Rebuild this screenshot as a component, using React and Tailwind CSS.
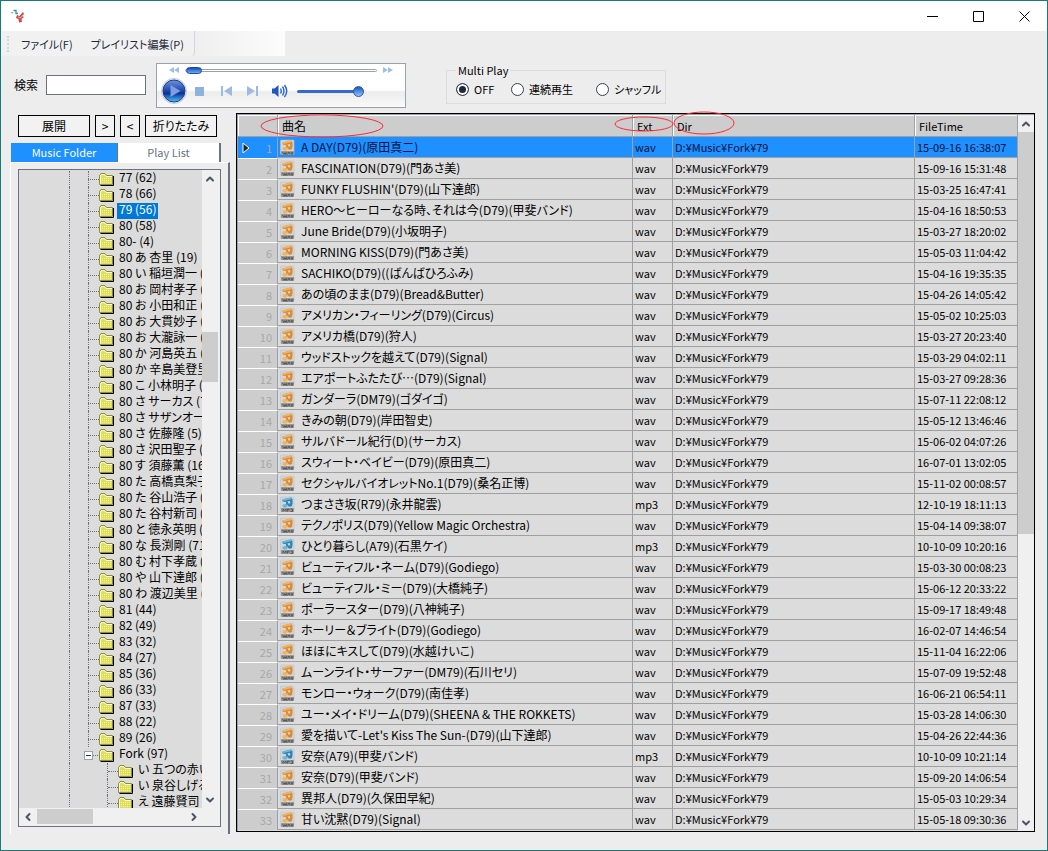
import { useState } from 'react'
import { ChevronUp, ChevronDown, ChevronLeft, ChevronRight } from 'lucide-react'

const FOLDERS = [
  '77 (62)', '78 (66)', '79 (56)', '80 (58)', '80- (4)', '80 あ 杏里 (19)', '80 い 稲垣潤一 (12)',
  '80 お 岡村孝子 (10)', '80 お 小田和正 (14)', '80 お 大貫妙子 (11)', '80 お 大瀧詠一 (15)',
  '80 か 河島英五 (8)', '80 か 辛島美登里 (9)', '80 こ 小林明子 (7)', '80 さ サーカス (7)',
  '80 さ サザンオールスターズ (20)', '80 さ 佐藤隆 (5)', '80 さ 沢田聖子 (6)', '80 す 須藤薫 (16)',
  '80 た 高橋真梨子 (13)', '80 た 谷山浩子 (10)', '80 た 谷村新司 (11)', '80 と 徳永英明 (9)',
  '80 な 長渕剛 (71)', '80 む 村下孝蔵 (12)', '80 や 山下達郎 (18)', '80 わ 渡辺美里 (14)',
  '81 (44)', '82 (49)', '83 (32)', '84 (27)', '85 (36)', '86 (33)', '87 (33)', '88 (22)', '89 (26)'
]

const FORK_FOLDERS = ['い 五つの赤い風船 (5)', 'い 泉谷しげる (9)', 'え 遠藤賢司 (4)']

const SONGS = [
  ['A DAY(D79)(原田真二)', 'wav', '15-09-16 16:38:07'],
  ['FASCINATION(D79)(門あさ美)', 'wav', '15-09-16 15:31:48'],
  ["FUNKY FLUSHIN'(D79)(山下達郎)", 'wav', '15-03-25 16:47:41'],
  ['HERO～ヒーローなる時、それは今(D79)(甲斐バンド)', 'wav', '15-04-16 18:50:53'],
  ['June Bride(D79)(小坂明子)', 'wav', '15-03-27 18:20:02'],
  ['MORNING KISS(D79)(門あさ美)', 'wav', '15-05-03 11:04:42'],
  ['SACHIKO(D79)((ばんばひろふみ)', 'wav', '15-04-16 19:35:35'],
  ['あの頃のまま(D79)(Bread&Butter)', 'wav', '15-04-26 14:05:42'],
  ['アメリカン・フィーリング(D79)(Circus)', 'wav', '15-05-02 10:25:03'],
  ['アメリカ橋(D79)(狩人)', 'wav', '15-03-27 20:23:40'],
  ['ウッドストックを越えて(D79)(Signal)', 'wav', '15-03-29 04:02:11'],
  ['エアポートふたたび…(D79)(Signal)', 'wav', '15-03-27 09:28:36'],
  ['ガンダーラ(DM79)(ゴダイゴ)', 'wav', '15-07-11 22:08:12'],
  ['きみの朝(D79)(岸田智史)', 'wav', '15-05-12 13:46:46'],
  ['サルバドール紀行(D)(サーカス)', 'wav', '15-06-02 04:07:26'],
  ['スウィート・ベイビー(D79)(原田真二)', 'wav', '16-07-01 13:02:05'],
  ['セクシャルバイオレットNo.1(D79)(桑名正博)', 'wav', '15-11-02 00:08:57'],
  ['つまさき坂(R79)(永井龍雲)', 'mp3', '12-10-19 18:11:13'],
  ['テクノポリス(D79)(Yellow Magic Orchestra)', 'wav', '15-04-14 09:38:07'],
  ['ひとり暮らし(A79)(石黒ケイ)', 'mp3', '10-10-09 10:20:16'],
  ['ビューティフル・ネーム(D79)(Godiego)', 'wav', '15-03-30 00:08:23'],
  ['ビューティフル・ミー(D79)(大橋純子)', 'wav', '15-06-12 20:33:22'],
  ['ポーラースター(D79)(八神純子)', 'wav', '15-09-17 18:49:48'],
  ['ホーリー＆ブライト(D79)(Godiego)', 'wav', '16-02-07 14:46:54'],
  ['ほほにキスして(D79)(水越けいこ)', 'wav', '15-11-04 16:22:06'],
  ['ムーンライト・サーファー(DM79)(石川セリ)', 'wav', '15-07-09 19:52:48'],
  ['モンロー・ウォーク(D79)(南佳孝)', 'wav', '16-06-21 06:54:11'],
  ['ユー・メイ・ドリーム(D79)(SHEENA & THE ROKKETS)', 'wav', '15-03-28 14:06:30'],
  ["愛を描いて-Let's Kiss The Sun-(D79)(山下達郎)", 'wav', '15-04-26 22:44:36'],
  ['安奈(A79)(甲斐バンド)', 'mp3', '10-10-09 10:21:14'],
  ['安奈(D79)(甲斐バンド)', 'wav', '15-09-20 14:06:54'],
  ['異邦人(D79)(久保田早紀)', 'wav', '15-05-03 10:29:34'],
  ['甘い沈黙(D79)(Signal)', 'wav', '15-05-18 09:30:36']
]

function FolderIcon() {
  return (
    <svg width="15" height="13" viewBox="0 0 15 13" className="shrink-0" aria-hidden="true">
      <path d="M1.500 12.500H14.500V3" fill="none" stroke="#000" />
      <path d="M.5 11.500V2.500L2 .5H6L7.500 2.500H13.500V11.500Z" fill="#dede5c" stroke="#8c8c3c" />
      <path d="M1.500 11V3L2.500 1.500H5.500L7 3.500H13" fill="none" stroke="#ffffd0" />
      <path d="M3 5.500H12M3 7.500H12M3 9.500H12" stroke="#f4f4a0" strokeDasharray="1 1" />
    </svg>
  )
}

function SongIcon({ ext }) {
  const isMp3 = ext === 'mp3'
  const dark = isMp3 ? '#2b83b8' : '#e0892a'
  const light = isMp3 ? '#6cb8dc' : '#f4b45c'
  return (
    <svg width="15" height="17" viewBox="0 0 15 17" className="shrink-0" aria-hidden="true">
      <rect x=".5" y="1" width="13.500" height="14.500" rx="1" fill="#d2d6da" stroke="#bcc2c8" strokeWidth=".6" />
      <rect x="1" y="12" width="13" height="4" fill="#9a9a9a" />
      <path d="M2.500 3.500L11 1.500L12.500 3L12.500 8L10.500 9.500L10 5L5 6L2.500 5.500Z" fill={dark} />
      <path d="M2.500 3.500L11 1.500L12 3L3.500 5Z" fill={light} />
      <path d="M6.500 5.500L7.500 7.500L6 9" fill="none" stroke={dark} strokeWidth="1.800" />
      <ellipse cx="5" cy="9.800" rx="2.700" ry="1.900" fill={light} />
      <ellipse cx="10" cy="9" rx="2.300" ry="1.700" fill={dark} />
      <path
        d={isMp3 ? 'M3 15.500V13L4.500 14.500L6 13V15.500M7.500 15.500V13H9V14.500M10.500 13H12.500V15.500H10.500' : 'M2.500 13L4 15.500L5 13.500L6 15.500L7 13M7.500 15.500L9 13L10 15.500M11 13L12 15.500L13 13'}
        fill="none"
        stroke="#505050"
        strokeWidth=".9"
      />
    </svg>
  )
}

function TreeLabel({ text, selected }) {
  return (
    <span className={`ml-[3px] h-4 whitespace-nowrap px-0.5 leading-3 ${selected ? 'bg-[#0078d7] text-white' : ''}`}>
      {text}
    </span>
  )
}

function FolderTree() {
  return (
    <ul className="min-w-0 flex-1 overflow-hidden pt-px">
      {FOLDERS.map(name => (
        <li key={name} className="flex h-4 pl-[50px]">
          <span className="w-[19px] shrink-0 border-l border-dotted border-gray-500" />
          <span className="h-[9px] w-[11px] shrink-0 border-b border-dotted border-gray-500" />
          <span className="-ml-[11px] mr-2.5 w-px shrink-0 border-l border-dotted border-gray-500" />
          <span className="flex pt-0.5"><FolderIcon /></span>
          <TreeLabel text={name} selected={name === '79 (56)'} />
        </li>
      ))}
      <li className="flex h-4 pl-[50px]">
        <span className="w-[15px] shrink-0 border-l border-dotted border-gray-500" />
        <button aria-label="Fork" className="mt-1 flex h-[9px] w-[9px] shrink-0 items-center justify-center border border-gray-400 bg-white">
          <span className="h-px w-[5px] bg-[#335]" />
        </button>
        <span className="mr-px h-[9px] w-[5px] shrink-0 border-b border-dotted border-gray-500" />
        <span className="flex pt-0.5"><FolderIcon /></span>
        <TreeLabel text="Fork (97)" />
      </li>
      {FORK_FOLDERS.map(name => (
        <li key={name} className="flex h-4 pl-[50px]">
          <span className="w-[38px] shrink-0 border-l border-dotted border-gray-500" />
          <span className="h-4 w-0 shrink-0 border-l border-dotted border-gray-500" />
          <span className="h-[9px] w-2.5 shrink-0 border-b border-dotted border-gray-500" />
          <span className="flex pt-0.5"><FolderIcon /></span>
          <TreeLabel text={name} />
        </li>
      ))}
    </ul>
  )
}

function VerticalScrollbar({ thumb }) {
  return (
    <div className="flex w-4 shrink-0 flex-col bg-[#f0f0f0] text-gray-600">
      <button aria-label="上へ" className="flex h-[17px] items-center justify-center"><ChevronUp size={12} strokeWidth={4} /></button>
      <div className="relative flex-1">
        <div className={`absolute inset-x-0 bg-[#cdcdcd] ${thumb}`} />
      </div>
      <button aria-label="下へ" className="flex h-[17px] items-center justify-center"><ChevronDown size={12} strokeWidth={4} /></button>
    </div>
  )
}

function TitleBar() {
  return (
    <header className="flex h-[30px] shrink-0 items-center justify-between bg-white pl-[9px]">
      <svg width="16" height="16" viewBox="0 0 16 16" aria-hidden="true">
        <path d="M1.500 4.500L3 5M3.500 2.500H6V5.500H8" fill="none" stroke="#3a94a0" strokeWidth="1.300" />
        <path d="M7 7L9.500 8L13 4L14 6L12 8L14 9L11.500 11L12 14L9 14.500L8.500 11L6 10Z" fill="#c94a4a" />
        <path d="M8 9L11 9.500M10 10.500L12 8" stroke="#f0a4a0" />
      </svg>
      <div className="flex h-full">
        <button aria-label="最小化" className="flex w-[46px] items-center justify-center">
          <svg width="11" height="11"><path d="M0 5.500H11" stroke="#000" /></svg>
        </button>
        <button aria-label="最大化" className="flex w-[46px] items-center justify-center">
          <svg width="11" height="11"><path d="M.5 .5H10.500V10.500H.5Z" fill="none" stroke="#000" /></svg>
        </button>
        <button aria-label="閉じる" className="flex w-[46px] items-center justify-center">
          <svg width="11" height="11"><path d="M.5 .5L10.500 10.500M10.500 .5L.5 10.500" stroke="#000" /></svg>
        </button>
      </div>
    </header>
  )
}

function MenuBar() {
  return (
    <nav className="flex h-[25px] shrink-0 items-center text-[11px]">
      <div className="flex h-full items-center rounded-br border-r border-gray-300 bg-[#f1f1f1] pl-1.5 pr-2.5">
        <span className="mr-3 h-4 border-l-2 border-dotted border-gray-300" />
        <button className="mr-[18px] text-gray-800">ファイル(F)</button>
        <button className="text-gray-800">プレイリスト編集(P)</button>
      </div>
      <div className="h-full w-[90px] bg-linear-to-r from-[#efefef] to-[#fcfcfc]" />
    </nav>
  )
}

function Player() {
  return (
    <div className="ml-[10px] mt-[7px] h-[45px] w-[250px] shrink-0 border border-gray-400 bg-linear-to-b from-white from-60% via-[#ececec] via-65% to-[#fafafa]">
      <div className="flex h-3 items-center pl-3 pr-3">
        <button aria-label="巻き戻し">
          <svg width="10" height="6" className="block"><path d="M5 0V6L0 3ZM10 0V6L5 3Z" fill="#9fc0e4" /></svg>
        </button>
        <input
          type="range"
          aria-label="再生位置"
          defaultValue="0"
          className="ml-[6px] mr-1.5 h-[7px] min-w-0 flex-1 appearance-none bg-transparent [&::-webkit-slider-runnable-track]:h-[3px] [&::-webkit-slider-runnable-track]:rounded-sm [&::-webkit-slider-runnable-track]:border [&::-webkit-slider-runnable-track]:border-gray-400 [&::-webkit-slider-runnable-track]:bg-white [&::-webkit-slider-thumb]:-mt-[3px] [&::-webkit-slider-thumb]:h-[7px] [&::-webkit-slider-thumb]:w-4 [&::-webkit-slider-thumb]:appearance-none [&::-webkit-slider-thumb]:rounded-full [&::-webkit-slider-thumb]:border [&::-webkit-slider-thumb]:border-[#1b46a8] [&::-webkit-slider-thumb]:bg-linear-to-b [&::-webkit-slider-thumb]:from-[#1f4db4] [&::-webkit-slider-thumb]:to-[#66aef4]"
        />
        <button aria-label="早送り">
          <svg width="10" height="6" className="block"><path d="M0 0V6L5 3ZM5 0V6L10 3Z" fill="#9fc0e4" /></svg>
        </button>
      </div>
      <div className="flex h-[30px] items-center pl-1">
        <button aria-label="再生">
          <svg width="26" height="26" viewBox="0 0 26 26" className="block">
            <defs>
              <linearGradient id="playFill" x1="0" y1="0" x2="0" y2="1">
                <stop offset="0" stopColor="#6f93d8" />
                <stop offset=".5" stopColor="#1c46ae" />
                <stop offset=".6" stopColor="#0b2f94" />
                <stop offset="1" stopColor="#4cc4fa" />
              </linearGradient>
            </defs>
            <circle cx="13" cy="13" r="12.500" fill="#e6eaf2" stroke="#c4cad8" />
            <circle cx="13" cy="13" r="11" fill="url(#playFill)" stroke="#1d3c8c" />
            <path d="M9.500 7L19.500 13L9.500 19Z" fill="#7c9fe0" />
          </svg>
        </button>
        <button aria-label="停止" className="ml-[8px]">
          <svg width="9" height="9" className="block"><path d="M0 0H9V9H0Z" fill="#8fb2dc" /></svg>
        </button>
        <button aria-label="前へ" className="ml-[17px]">
          <svg width="11" height="10" className="block"><path d="M0 0H2V10H0ZM11 0V10L3 5Z" fill="#9dbbe0" /></svg>
        </button>
        <button aria-label="次へ" className="ml-[15px]">
          <svg width="11" height="10" className="block"><path d="M9 0H11V10H9ZM0 0V10L8 5Z" fill="#9dbbe0" /></svg>
        </button>
        <button aria-label="ミュート" className="ml-[14px]">
          <svg width="16" height="14" viewBox="0 0 16 14" className="block">
            <path d="M0 4.500H2.500L6.500 1V13L2.500 9.500H0Z" fill="#1c57c0" />
            <path d="M8.500 4.500Q10 7 8.500 9.500M10.500 2.500Q13.500 7 10.500 11.500M12.500 1Q17 7 12.500 13" fill="none" stroke="#2a66cc" strokeWidth="1.400" />
          </svg>
        </button>
        <input
          type="range"
          aria-label="音量"
          defaultValue="100"
          className="ml-[9px] h-[11px] w-[67px] appearance-none bg-transparent [&::-webkit-slider-runnable-track]:h-[3px] [&::-webkit-slider-runnable-track]:rounded-full [&::-webkit-slider-runnable-track]:bg-[#3569cf] [&::-webkit-slider-thumb]:-mt-1 [&::-webkit-slider-thumb]:h-[11px] [&::-webkit-slider-thumb]:w-[11px] [&::-webkit-slider-thumb]:appearance-none [&::-webkit-slider-thumb]:rounded-full [&::-webkit-slider-thumb]:border [&::-webkit-slider-thumb]:border-[#2b56ac] [&::-webkit-slider-thumb]:bg-linear-to-b [&::-webkit-slider-thumb]:from-[#2454bc] [&::-webkit-slider-thumb]:to-[#8cc4fa]"
        />
      </div>
    </div>
  )
}

function PlayMode({ mode, setMode }) {
  const modes = [
    { id: 'off', name: 'OFF', width: 'w-[55px]' },
    { id: 'continuous', name: '連続再生', width: 'w-[85px]' },
    { id: 'shuffle', name: 'シャッフル', width: '' }
  ]

  return (
    <fieldset className="ml-10 mt-1.5 h-[42px] w-[220px] shrink-0 border border-[#dcdcdc] pl-[9px] text-[11px]">
      <legend className="px-0.5 leading-4">Multi Play</legend>
      <div className="flex pt-[3px]">
        {modes.map(item => (
          <label key={item.id} className={`flex h-4 items-center whitespace-nowrap ${item.width}`}>
            <input
              type="radio"
              name="playMode"
              checked={mode === item.id}
              onChange={() => setMode(item.id)}
              className="mr-[5px] h-[13px] w-[13px] shrink-0 appearance-none rounded-full border border-gray-700 bg-white checked:border-gray-700 checked:bg-gray-800 checked:shadow-[inset_0_0_0_2px_white]"
            />
            {item.name}
          </label>
        ))}
      </div>
    </fieldset>
  )
}

function Sidebar() {
  const [tab, setTab] = useState('folder')
  const buttonClass = 'h-[22px] border border-black bg-[#f2f2f2] leading-5'

  return (
    <aside className="flex w-[220px] shrink-0 flex-col">
      <div className="ml-2 mt-0.5 flex gap-[5px]">
        <button className={`${buttonClass} w-[72px]`}>展開</button>
        <button className={`${buttonClass} w-5`}>&gt;</button>
        <button className={`${buttonClass} w-5`}>&lt;</button>
        <button className={`${buttonClass} w-[72px]`}>折りたたみ</button>
      </div>
      <div className="mt-1.5 flex h-[19px] text-[11px]" role="tablist">
        <button
          role="tab"
          aria-selected={tab === 'folder'}
          onClick={() => setTab('folder')}
          className="ml-px w-[107px] border-r border-gray-500 bg-[#1e90ff] pb-0.5 leading-4 text-white"
        >
          Music Folder
        </button>
        <button
          role="tab"
          aria-selected={tab === 'list'}
          onClick={() => setTab('list')}
          className="w-[103px] border-r-2 border-gray-500 bg-white pb-0.5 leading-4 text-gray-500"
        >
          Play List
        </button>
      </div>
      <div className="flex min-h-0 flex-1 flex-col border-l border-r-2 border-t border-l-white border-r-gray-500 border-t-white pb-[7px] pl-[7px] pr-[7px] pt-[6px]">
        <div className="flex min-h-0 flex-1 flex-col border border-gray-500 bg-[#dcdcdc]">
          <div className="flex min-h-0 flex-1 bg-[#f0f0f0] pr-0.5">
            <div className="flex min-w-0 flex-1 bg-[#dcdcdc]">
              <FolderTree />
            </div>
            <VerticalScrollbar thumb="top-[145px] h-[50px]" />
          </div>
          <div className="flex h-[18px] shrink-0 bg-[#f0f0f0] pr-[17px] text-gray-600">
            <button aria-label="左へ" className="flex w-[18px] items-center justify-center"><ChevronLeft size={12} strokeWidth={4} /></button>
            <div className="flex-1 py-px"><div className="h-[15px] w-14 bg-[#cdcdcd]" /></div>
            <button aria-label="右へ" className="flex w-[18px] items-center justify-center"><ChevronRight size={12} strokeWidth={4} /></button>
          </div>
        </div>
      </div>
    </aside>
  )
}

function SongGrid() {
  const [current, setCurrent] = useState(0)
  const headClass = 'border-b border-r border-b-gray-400 border-r-gray-400 bg-[#cdcdcd] pl-1 text-left font-normal shadow-[inset_1px_1px_0_white]'
  const cellClass = 'overflow-hidden whitespace-nowrap border-b border-r border-[#a0a0a0] pl-0.5'

  return (
    <main className="relative mb-[18px] ml-[6px] mr-[12px] flex min-w-0 flex-1 border border-black">
      <div className="flex min-w-0 flex-1 overflow-hidden border-l border-t border-gray-400">
        <div className="min-w-0 flex-1 overflow-hidden bg-[#dcdcdc]">
          <table className="w-full table-fixed border-separate border-spacing-0">
            <colgroup>
              <col className="w-[40px]" />
              <col />
              <col className="w-[40px]" />
              <col className="w-[242px]" />
              <col className="w-[103px]" />
            </colgroup>
            <thead>
              <tr className="h-[22px]">
                <th className={headClass} aria-label="No." />
                <th className={headClass}>曲名</th>
                <th className={`${headClass} text-[11px]`}>Ext</th>
                <th className={`${headClass} text-[11px]`}>Dir</th>
                <th className={`${headClass} text-[11px]`}>FileTime</th>
              </tr>
            </thead>
            <tbody>
              {SONGS.map(([name, ext, time], i) => (
                <tr
                  key={name}
                  onClick={() => setCurrent(i)}
                  className={`h-[21px] ${i === current ? 'bg-[#1e90ff] text-[#001040]' : ''}`}
                >
                  <td className={`border-r border-t border-r-gray-400 text-[11px] text-[#a8a8a8] ${i === current ? 'border-t-[#1e90ff]' : 'border-t-white bg-[#cdcdcd]'}`}>
                    <div className="flex items-center justify-between pl-[4px] pr-[5px]">
                      <span>
                        {i === current && (
                          <svg width="8" height="12" className="block"><path d="M1 1L7 6L1 11Z" fill="#222" stroke="#fff" /></svg>
                        )}
                      </span>
                      {i + 1}
                    </div>
                  </td>
                  <td className={cellClass}>
                    <div className="flex h-4 items-center gap-1.5">
                      <SongIcon ext={ext} />
                      {name}
                    </div>
                  </td>
                  <td className={`${cellClass} text-[11px]`}>{ext}</td>
                  <td className={`${cellClass} text-[11px]`}>D:¥Music¥Fork¥79</td>
                  <td className={`${cellClass} text-[11px]`}>{time}</td>
                </tr>
              ))}
            </tbody>
          </table>
        </div>
        <VerticalScrollbar thumb="top-0 h-[402px]" />
      </div>
      <svg width="500" height="28" className="pointer-events-none absolute -top-1 left-[22px] fill-none stroke-red-500" aria-hidden="true">
        <ellipse cx="63" cy="16" rx="61" ry="11" />
        <ellipse cx="385" cy="14" rx="29" ry="7" />
        <ellipse cx="445" cy="13" rx="30" ry="11" />
      </svg>
    </main>
  )
}

export default function App() {
  const [mode, setMode] = useState('off')

  return (
    <div className="flex h-screen flex-col overflow-hidden border border-[#177a76] bg-[#ededed] font-['Noto_Sans_CJK_JP',sans-serif] text-[12px] leading-4 text-black [font-feature-settings:'palt']">
      <TitleBar />
      <MenuBar />
      <div className="flex h-[57px] shrink-0">
        <div className="flex items-center gap-2 pl-[13px] pt-px">
          <label htmlFor="search">検索</label>
          <input id="search" type="text" className="h-5 w-[100px] border border-gray-500 bg-white px-1" />
        </div>
        <Player />
        <PlayMode mode={mode} setMode={setMode} />
      </div>
      <div className="flex min-h-0 flex-1 pl-[9px]">
        <div className="flex pb-[16px]">
          <Sidebar />
        </div>
        <SongGrid />
      </div>
    </div>
  )
}
